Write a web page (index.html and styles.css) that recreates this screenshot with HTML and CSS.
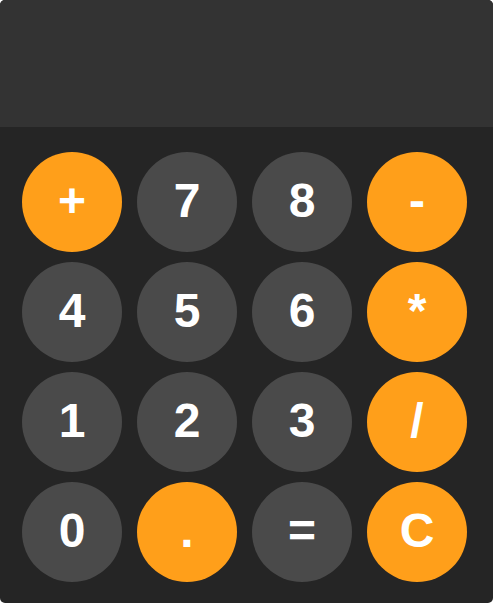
FILE: index.html
```html
<!DOCTYPE html>
<html lang="en">
<head>
    <meta charset="UTF-8">
    <meta name="viewport" content="width=device-width, initial-scale=1.0">
    <title>Calculator</title>
    <link rel="stylesheet" href="styles.css">
</head>
<body>
    <div class="calculator">
        <!-- Display -->
        <input type="text" class="display" id="display" readonly>

        <!-- Keys -->
        <div class="keys">
            <button class="key operator">+</button>
            <button class="key">7</button>
            <button class="key">8</button>
            <button class="key operator">-</button>

            <button class="key">4</button>
            <button class="key">5</button>
            <button class="key">6</button>
            <button class="key operator">*</button>

            <button class="key">1</button>
            <button class="key">2</button>
            <button class="key">3</button>
            <button class="key operator">/</button>

            <button class="key">0</button>
            <button class="key operator">.</button>
            <button class="key">=</button>
            <button class="key operator">C</button>
        </div>
    </div>
</body>
</html>
```

FILE: styles.css
```css
* {
    margin: 0;
    padding: 0;
    box-sizing: border-box;
}

body {
    font-family: "Liberation Sans", Arial, sans-serif;
    background-color: #fff;
}

.calculator {
    width: 493px;
    height: 603px;
    background-color: #252525;
    border-radius: 5px;
    overflow: hidden;
}

.display {
    display: block;
    width: 100%;
    height: 127px;
    border: none;
    outline: none;
    padding: 20px;
    background-color: #333;
    color: #fff;
    font-size: 48px;
    text-align: right;
}

.keys {
    display: grid;
    grid-template-columns: repeat(4, 100px);
    gap: 10px 15px;
    padding: 25px 26px 21px 22px;
}

.key {
    width: 100px;
    height: 100px;
    border: none;
    border-radius: 50%;
    padding-bottom: 4px;
    background-color: #4a4a4a;
    color: #fff;
    font-family: "Liberation Sans", Arial, sans-serif;
    font-size: 48px;
    font-weight: bold;
    cursor: pointer;
}

.key.operator {
    background-color: #ff9f1a;
}
```
